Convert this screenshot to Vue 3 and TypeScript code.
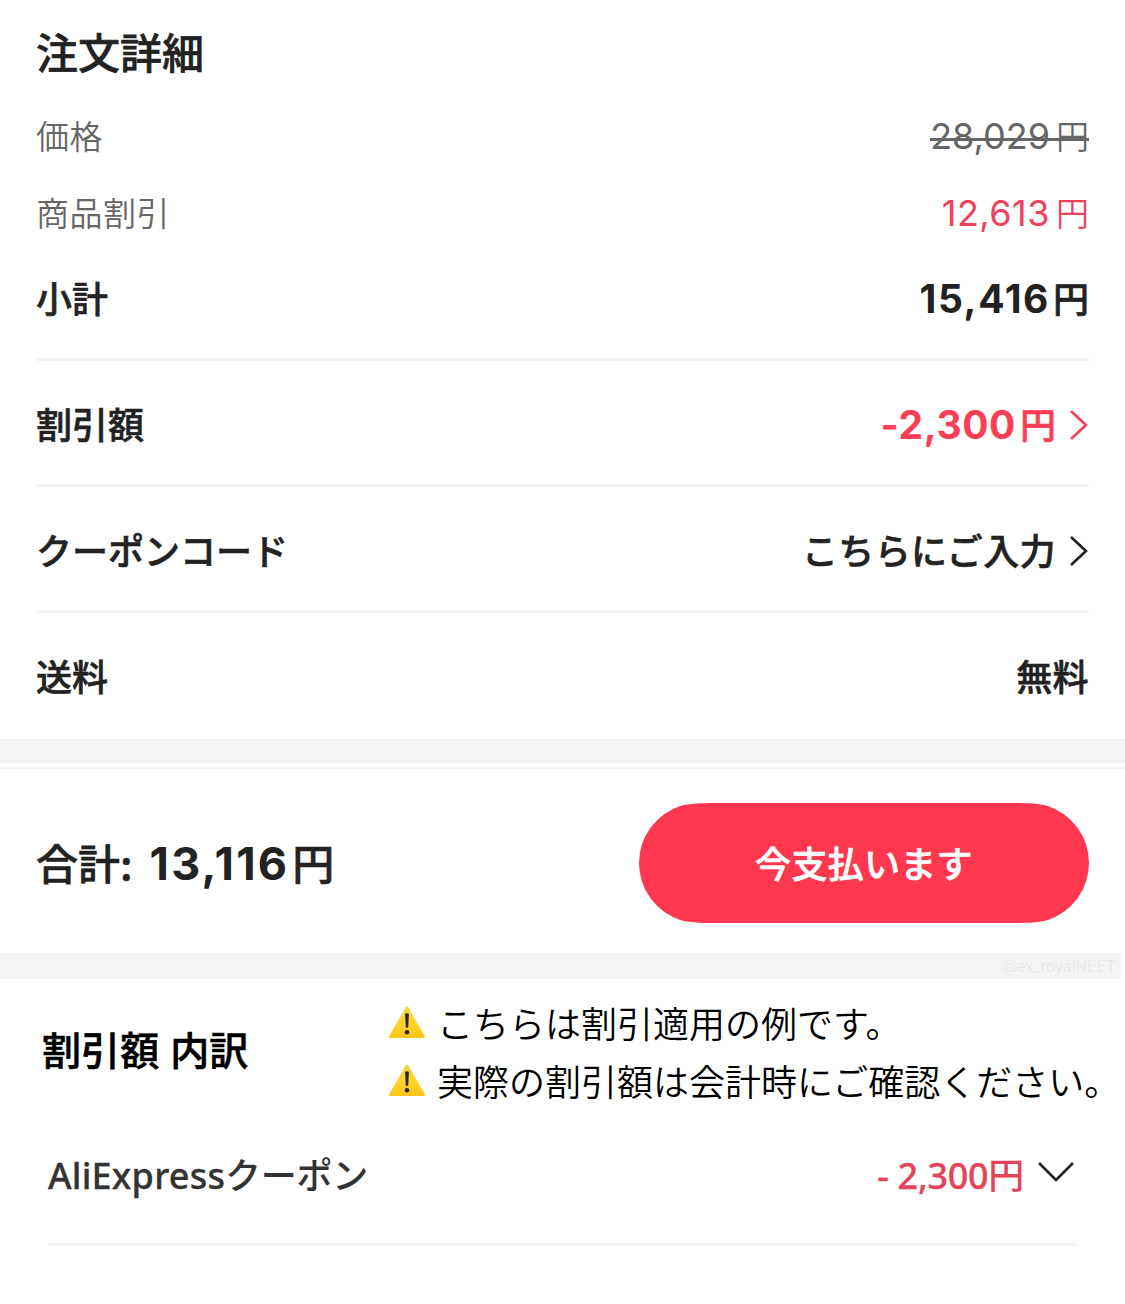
<script setup lang="ts">
interface PriceRow {
  label: string
  amount: string
  kind: 'price' | 'sale' | 'subtotal'
}

interface OptionRow {
  label: string
  amount?: string
  text?: string
  accent?: boolean
  link?: boolean
}

const priceRows: PriceRow[] = [
  { label: '価格', amount: '28,029', kind: 'price' },
  { label: '商品割引', amount: '12,613', kind: 'sale' },
  { label: '小計', amount: '15,416', kind: 'subtotal' },
]

const optionRows: OptionRow[] = [
  { label: '割引額', amount: '-2,300', accent: true, link: true },
  { label: 'クーポンコード', text: 'こちらにご入力', link: true },
  { label: '送料', text: '無料' },
]

const notices: string[] = [
  'こちらは割引適用の例です。',
  '実際の割引額は会計時にご確認ください。',
]
</script>

<template>
  <main class="page">
    <section class="order">
      <h1 class="title">注文詳細</h1>
      <div v-for="row in priceRows" :key="row.label" class="row" :class="row.kind">
        <span class="label">{{ row.label }}</span>
        <span class="value"><span class="num">{{ row.amount }}</span><span class="yen">円</span></span>
      </div>
      <div class="options">
        <div
          v-for="row in optionRows"
          :key="row.label"
          class="option"
          :class="{ accent: row.accent }"
        >
          <span class="label">{{ row.label }}</span>
          <span class="value">
            <template v-if="row.amount"><span class="num">{{ row.amount }}</span><span class="yen">円</span></template>
            <span v-else class="text">{{ row.text }}</span>
            <svg v-if="row.link" class="chevron" width="20" height="32" viewBox="0 0 20 32">
              <path d="M2 2 L17 16 L2 30" fill="none" stroke="currentColor" stroke-width="2.6" />
            </svg>
          </span>
        </div>
      </div>
    </section>

    <div class="band"></div>

    <section class="checkout">
      <div class="total">
        <span class="total-label">合計:</span>
        <span class="num">13,116</span><span class="yen">円</span>
      </div>
      <button class="pay" type="button">
        <svg class="pay-shape" width="450" height="120" viewBox="0 0 450 120">
          <path
            d="M84 0 H366 C384 0 398 0 408 2.8 A60 60 0 0 1 450 60 A60 60 0 0 1 408 117.2 C398 120 384 120 366 120 H84 C66 120 52 120 42 117.2 A60 60 0 0 1 0 60 A60 60 0 0 1 42 2.8 C52 0 66 0 84 0 Z"
            fill="#ff384f"
          />
        </svg>
        <span class="pay-text">今支払います</span>
      </button>
    </section>

    <div class="band credit">@ex_royalNEET</div>

    <section class="breakdown">
      <div class="breakdown-head">
        <h2 class="subtitle">割引額 内訳</h2>
        <div class="notices">
          <p v-for="notice in notices" :key="notice" class="notice">
            <svg class="warn" width="36" height="34" viewBox="0 0 36 34">
              <defs>
                <linearGradient id="warn-fill" x1="0" y1="0" x2="0" y2="1">
                  <stop offset="0" stop-color="#f2d34b" />
                  <stop offset="0.55" stop-color="#fdd32c" />
                  <stop offset="1" stop-color="#fcc419" />
                </linearGradient>
              </defs>
              <path
                d="M16.6 1.6 Q18 -0.4 19.4 1.6 L35.6 29.8 Q36.4 32 34.6 32 H1.4 Q-0.4 32 0.4 29.8 Z"
                fill="url(#warn-fill)"
              />
              <path d="M16.1 7.8 Q18 6.6 19.9 7.8 L19.2 21.4 Q18 22.2 16.8 21.4 Z" fill="#2b2308" />
              <circle cx="18" cy="26.2" r="2.2" fill="#2b2308" />
            </svg>
            <span>{{ notice }}</span>
          </p>
        </div>
      </div>
      <div class="coupon">
        <span class="coupon-name">AliExpress<span class="kana">クーポン</span></span>
        <span class="coupon-value">
          <span class="coupon-amount">- 2,300<span class="kana">円</span></span>
          <svg width="36" height="22" viewBox="0 0 36 22">
            <path d="M1 2 L18 19 L35 2" fill="none" stroke="#222" stroke-width="2.6" stroke-linejoin="round" />
          </svg>
        </span>
      </div>
    </section>
  </main>
</template>

<style>
body {
  margin: 0;
  background: #fff;
}
</style>

<style scoped>
.page {
  width: 1125px;
  height: 1304px;
  overflow: hidden;
  background: #fff;
  color: #222;
  font-family: "Noto Sans CJK JP", sans-serif;
  box-sizing: border-box;
}

.order {
  height: 739px;
  padding: 0 36px;
  box-sizing: border-box;
  display: flex;
  flex-direction: column;
}

.title,
.subtotal,
.option,
.total,
.pay,
.subtitle {
  font-weight: 500;
  -webkit-text-stroke: 0.6px currentColor;
}

.title {
  margin: 0;
  height: 106px;
  line-height: 102px;
  font-size: 42px;
}

.row {
  display: flex;
  justify-content: space-between;
  white-space: nowrap;
}

.price,
.sale {
  font-size: 33px;
  color: #666;
  font-weight: 350;
}

.price .label,
.sale .label {
  letter-spacing: 0.5px;
}

.price {
  height: 62px;
  line-height: 58px;
}

.sale {
  height: 92px;
  line-height: 88px;
}

.subtotal {
  height: 98px;
  line-height: 74px;
  font-size: 36px;
}

.value {
  display: flex;
}

.num {
  padding-top: 1.5px;
  font-family: Inter, sans-serif;
}

.subtotal .num,
.option .num,
.total .num {
  font-weight: 700;
  -webkit-text-stroke: 0;
}

.price .num,
.sale .num {
  font-size: 36px;
  font-weight: 400;
  padding-top: 1px;
  padding-right: 6px;
}

.price .value {
  background: linear-gradient(#666, #666) 0 32px / 100% 3px no-repeat;
}

.sale .value {
  color: #f0415a;
}

.sale .num {
  letter-spacing: 0.5px;
}

.subtotal .num,
.option .num {
  font-size: 39px;
  margin-right: 4px;
  letter-spacing: 0.6px;
}

.subtotal .num {
  margin-right: 3px;
  letter-spacing: 1.6px;
}

.option {
  height: 126px;
  box-sizing: border-box;
  border-top: 3px solid #f4f4f4;
  line-height: 124px;
  display: flex;
  justify-content: space-between;
  font-size: 36px;
  white-space: nowrap;
}

.text {
  letter-spacing: 0.4px;
}

.accent .value {
  color: #fb3e54;
}

.chevron {
  margin: 48px 0 0 13px;
}

.band {
  height: 24px;
  background: #f4f4f4;
}

.checkout {
  margin-top: 4px;
  height: 186px;
  box-sizing: border-box;
  border-top: 2px solid #f4f4f4;
  padding: 34px 36px 0;
  display: flex;
  justify-content: space-between;
}

.total {
  display: flex;
  height: 120px;
  line-height: 118px;
  font-size: 42px;
  white-space: nowrap;
}

.total .num {
  font-size: 45px;
  letter-spacing: 2.2px;
  margin: 0 3px 0 17px;
}

.pay {
  width: 450px;
  height: 120px;
  padding: 0;
  border: 0;
  background: none;
  display: grid;
  color: #fff;
  font-family: "Noto Sans CJK JP", sans-serif;
  font-size: 36px;
  letter-spacing: 0.3px;
}

.pay-shape,
.pay-text {
  grid-area: 1 / 1;
}

.pay-text {
  line-height: 118px;
}

.credit {
  width: 1121px;
  height: 26px;
  padding-right: 5px;
  box-sizing: border-box;
  text-align: right;
  font: 300 16px/28px Roboto, sans-serif;
  letter-spacing: 0.25px;
  color: #e6e6e6;
}

.breakdown-head {
  display: flex;
  height: 142px;
}

.subtitle {
  margin: 0 0 0 42px;
  width: 347px;
  font-size: 39px;
  line-height: 138px;
  color: #000;
  word-spacing: 2px;
  letter-spacing: 0.1px;
}

.notices {
  padding-top: 15px;
}

.notice {
  margin: 0;
  height: 58px;
  line-height: 57px;
  display: flex;
  font-size: 36px;
  font-weight: 350;
  color: #000;
  white-space: nowrap;
}

.warn {
  margin: 12px 12px 0 0;
}

.coupon {
  margin: 0 48px;
  height: 125px;
  box-sizing: border-box;
  border-bottom: 3px solid #f4f4f4;
  display: flex;
  justify-content: space-between;
  line-height: 104px;
  font-family: "Noto Sans", sans-serif;
  font-size: 36px;
  font-weight: 500;
  -webkit-text-stroke: 0.3px currentColor;
  color: #333;
  white-space: nowrap;
}

.coupon-name {
  letter-spacing: 0.2px;
}

.kana {
  font-family: "Noto Sans CJK JP", sans-serif;
  letter-spacing: -0.3px;
  -webkit-text-stroke: 0;
}

.coupon-value {
  display: flex;
  gap: 14px;
  margin-right: 3px;
}

.coupon-value svg {
  margin-top: 40px;
}

.coupon-amount {
  color: #e3445a;
  letter-spacing: -0.3px;
}
</style>
